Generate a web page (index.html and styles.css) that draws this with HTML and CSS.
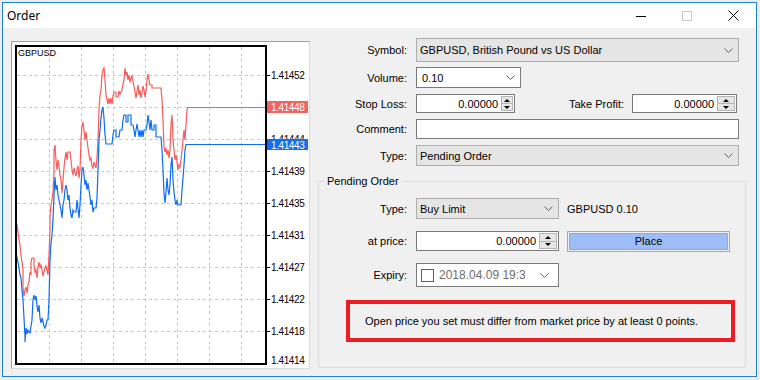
FILE: index.html
```html
<!DOCTYPE html>
<html lang="en">
<head>
  <meta charset="UTF-8">
  <title>Order</title>
  <link rel="stylesheet" href="styles.css">
</head>
<body>
<div class="window">
  <div class="titlebar">
    <span class="title">Order</span>
    <div class="caption">
      <div class="cap"><svg width="10" height="10" viewBox="0 0 10 10"><line x1="0" y1="5.5" x2="10" y2="5.5" stroke="#000" stroke-width="1"/></svg></div>
      <div class="cap"><svg width="10" height="10" viewBox="0 0 10 10"><rect x="0.5" y="0.5" width="9" height="9" fill="none" stroke="#c8c8c8" stroke-width="1"/></svg></div>
      <div class="cap"><svg width="11" height="11" viewBox="0 0 11 11"><path d="M0.5 0.5 L10.5 10.5 M10.5 0.5 L0.5 10.5" stroke="#000" stroke-width="1"/></svg></div>
    </div>
  </div>

  <div class="content">
    <div class="chart_panel">
      <svg width="297" height="326" viewBox="12 42 297 326" class="chart">
        <!-- grid -->
        <g stroke="#c8c8c8" stroke-width="1" stroke-dasharray="3 3" shape-rendering="crispEdges">
          <line x1="49.5" y1="47" x2="49.5" y2="362"/>
          <line x1="81.5" y1="47" x2="81.5" y2="362"/>
          <line x1="113.5" y1="47" x2="113.5" y2="362"/>
          <line x1="145.5" y1="47" x2="145.5" y2="362"/>
          <line x1="177.5" y1="47" x2="177.5" y2="362"/>
          <line x1="209.5" y1="47" x2="209.5" y2="362"/>
          <line x1="241.5" y1="47" x2="241.5" y2="362"/>
          <line x1="17" y1="75.5" x2="264" y2="75.5"/>
          <line x1="17" y1="107.5" x2="264" y2="107.5"/>
          <line x1="17" y1="139.5" x2="264" y2="139.5"/>
          <line x1="17" y1="171.5" x2="264" y2="171.5"/>
          <line x1="17" y1="203.5" x2="264" y2="203.5"/>
          <line x1="17" y1="235.5" x2="264" y2="235.5"/>
          <line x1="17" y1="267.5" x2="264" y2="267.5"/>
          <line x1="17" y1="299.5" x2="264" y2="299.5"/>
          <line x1="17" y1="331.5" x2="264" y2="331.5"/>
        </g>

        <!-- ask line -->
        <polyline fill="none" stroke="#f85a5a" stroke-width="1.2" stroke-linejoin="miter"
          points="16,220 17,225 18,232 19,240 20,245 21,255 22,262 23,270 23,288 24,296 25,290 26,287 27,293 28,285 29,282 30,272 31,275 31,262 32,258 34,258 34,266 35,272 36,270 37,278 38,268 39,262 40,268 41,265 42,270 43,276 44,272 45,268 46,266 47,270 48,275 49,255 50,230 50,215 51,205 52,200 53,192 54,172 54,150 55,145 56,160 57,170 58,160 59,166 60,175 61,180 62,193 63,180 64,168 65,158 66,152 67,160 68,152 70,152 71,160 72,170 73,175 74,168 75,172 76,176 77,170 78,166 79,178 80,170 81,140 82,126 83,122 84,130 85,140 86,132 87,140 88,148 89,155 90,160 91,158 92,166 93,168 94,162 95,165 96,168 97,158 98,140 99,110 100,95 101,90 102,75 103,70 104,68 105,80 106,95 107,100 108,104 109,98 110,104 111,98 112,104 113,96 114,92 116,92 116,97 118,97 119,91 120,94 122,90 123,84 124,80 125,68 126,75 127,72 128,80 129,75 130,82 131,78 132,76 133,82 134,86 135,92 136,98 137,91 138,85 139,95 140,90 141,98 142,93 143,86 144,90 145,97 146,91 147,80 148,74 149,80 150,85 152,85 152,88 161,88 162,100 163,120 164,147 165,152 166,148 167,155 168,150 169,158 170,150 171,125 172,115 173,140 174,150 175,160 176,155 177,162 178,170 179,165 180,167 181,160 182,150 183,140 184,130 185,140 186,125 187,110 188,107.5 266,107.5"/>

        <!-- bid line -->
        <polyline fill="none" stroke="#0c6cf5" stroke-width="1.2" stroke-linejoin="miter"
          points="16,252 17,258 18,262 19,268 20,275 21,278 22,290 23,300 24,318 25,336 25,342 26,328 27,334 28,330 29,332 30,333 31,326 32,320 33,300 34,295 35,300 36,296 37,306 38,312 39,305 40,318 41,323 42,318 43,322 44,326 45,328 46,325 47,320 48,320 49,300 50,260 51,243 52,235 53,220 54,195 55,177 56,190 57,185 58,195 59,200 60,205 61,210 62,218 63,205 64,200 65,190 66,185 67,190 68,200 69,195 70,208 71,215 72,218 73,210 74,212 76,212 77,200 78,208 79,218 80,205 81,185 82,170 83,167 84,175 85,185 86,180 87,190 88,183 89,190 90,197 91,205 92,200 93,212 94,208 96,208 97,198 98,170 99,140 100,130 101,118 102,110 103,107 104,118 105,135 106,144 112,144 113,135 114,130 116,130 116,137 119,137 120,130 122,130 123,120 124,115 126,115 126,122 128,122 128,115 131,115 131,125 133,125 134,130 135,137 136,130 137,124 138,130 139,137 140,130 141,137 142,130 143,137 144,130 146,130 147,125 148,115 149,122 150,130 151,120 152,130 154,130 154,125 156,125 156,137 161,137 162,150 163,170 164,193 165,203 166,192 167,178 168,190 169,195 170,185 171,165 172,157 173,180 174,192 175,200 176,205 177,200 178,205 181,205 182,190 183,178 184,165 185,150 186,144.5 266,144.5"/>

        <!-- frame -->
        <rect x="16" y="46" width="250" height="318" fill="none" stroke="#000" stroke-width="2"/>
        <g stroke="#000" stroke-width="1" shape-rendering="crispEdges">
          <line x1="266" y1="75.5" x2="270" y2="75.5"/>
          <line x1="266" y1="107.5" x2="270" y2="107.5"/>
          <line x1="266" y1="139.5" x2="270" y2="139.5"/>
          <line x1="266" y1="171.5" x2="270" y2="171.5"/>
          <line x1="266" y1="203.5" x2="270" y2="203.5"/>
          <line x1="266" y1="235.5" x2="270" y2="235.5"/>
          <line x1="266" y1="267.5" x2="270" y2="267.5"/>
          <line x1="266" y1="299.5" x2="270" y2="299.5"/>
          <line x1="266" y1="331.5" x2="270" y2="331.5"/>
        </g>

        <text x="18" y="56" class="sym">GBPUSD</text>

        <g class="prices">
          <text x="271" y="79">1.41452</text>
          <text x="271" y="143">1.41444</text>
          <text x="271" y="175">1.41439</text>
          <text x="271" y="207">1.41435</text>
          <text x="271" y="239">1.41431</text>
          <text x="271" y="271">1.41427</text>
          <text x="271" y="303">1.41422</text>
          <text x="271" y="335">1.41418</text>
          <text x="271" y="364">1.41414</text>
        </g>
        <rect x="267" y="101" width="41" height="12" fill="#f26262"/>
        <text x="271" y="111" class="tag">1.41448</text>
        <rect x="267" y="139" width="41" height="11" fill="#0f6ef2"/>
        <text x="271" y="148.5" class="tag">1.41443</text>
      </svg>
    </div>

    <div class="form">
      <div class="row r_symbol">
        <span class="lbl">Symbol:</span>
        <div class="combo w_full">GBPUSD, British Pound vs US Dollar<svg class="chev" width="9" height="5" viewBox="0 0 9 5"><polyline points="0.5,0.5 4.5,4.5 8.5,0.5" fill="none" stroke="#606060"/></svg></div>
      </div>
      <div class="row r_volume">
        <span class="lbl">Volume:</span>
        <div class="combo edit w_vol">0.10<svg class="chev" width="9" height="5" viewBox="0 0 9 5"><polyline points="0.5,0.5 4.5,4.5 8.5,0.5" fill="none" stroke="#606060"/></svg></div>
      </div>
      <div class="row r_stops">
        <span class="lbl">Stop Loss:</span>
        <div class="num w_sl"><span class="val">0.00000</span><div class="spin sp_small"><i class="up"></i><i class="dn"></i></div></div>
        <span class="lbl2">Take Profit:</span>
        <div class="num w_tp"><span class="val">0.00000</span><div class="spin"><i class="up"></i><i class="dn"></i></div></div>
      </div>
      <div class="row r_comment">
        <span class="lbl">Comment:</span>
        <div class="edit_box w_full"></div>
      </div>
      <div class="row r_type">
        <span class="lbl">Type:</span>
        <div class="combo w_full">Pending Order<svg class="chev" width="9" height="5" viewBox="0 0 9 5"><polyline points="0.5,0.5 4.5,4.5 8.5,0.5" fill="none" stroke="#606060"/></svg></div>
      </div>

      <fieldset class="group">
        <legend>Pending Order</legend>
        <div class="row g_type">
          <span class="lbl">Type:</span>
          <div class="combo w_half">Buy Limit<svg class="chev" width="9" height="5" viewBox="0 0 9 5"><polyline points="0.5,0.5 4.5,4.5 8.5,0.5" fill="none" stroke="#606060"/></svg></div>
          <span class="info">GBPUSD 0.10</span>
        </div>
        <div class="row g_price">
          <span class="lbl">at price:</span>
          <div class="num w_half"><span class="val">0.00000</span><div class="spin"><i class="up"></i><i class="dn"></i></div></div>
          <button class="place"><span>Place</span></button>
        </div>
        <div class="row g_expiry">
          <span class="lbl">Expiry:</span>
          <div class="date w_half">
            <span class="check"></span>
            <span class="date_txt">2018.04.09 19:35</span>
            <svg class="chev" width="9" height="5" viewBox="0 0 9 5"><polyline points="0.5,0.5 4.5,4.5 8.5,0.5" fill="none" stroke="#606060"/></svg>
          </div>
        </div>
        <div class="warn">Open price you set must differ from market price by at least 0 points.</div>
      </fieldset>
    </div>
  </div>
</div>
</body>
</html>
```

FILE: styles.css
```css
body {
  margin: 0;
  background: #ececec;
  font-family: "Liberation Sans", Arial, sans-serif;
  font-size: 11px;
  color: #000;
}
.window {
  margin: 2px 0 0 2px;
  width: 753px;
  height: 373px;
  border: 1px solid #1883d7;
  background: #f0f0f0;
}
.titlebar {
  height: 25px;
  background: #fff;
  display: flex;
  align-items: center;
}
.title {
  margin-left: 4px;
  font-family: "Noto Sans", "Open Sans", sans-serif;
  font-size: 12px;
}
.caption {
  margin-left: auto;
  display: flex;
}
.cap {
  width: 46px;
  height: 25px;
  display: flex;
  align-items: center;
  justify-content: center;
}
.content {
  display: flex;
  height: 348px;
  box-sizing: border-box;
  padding: 10px 0 0 8px;
}
.chart_panel {
  margin-top: 3px;
  width: 299px;
  height: 328px;
  box-sizing: border-box;
  border: 1px solid #a0a0a0;
  border-right-color: #dadada;
  border-bottom-color: #dadada;
  background: #fff;
}
.chart {
  display: block;
}
.chart text {
  font-family: "Liberation Sans", Arial, sans-serif;
}
.sym {
  font-size: 9px;
  fill: #000;
}
.prices text {
  font-size: 10px;
  letter-spacing: -0.4px;
  fill: #000;
}
.tag {
  font-size: 10px;
  letter-spacing: -0.4px;
  fill: #fff;
}
.form {
  margin-left: 8px;
  width: 428px;
}
.row {
  display: flex;
  align-items: center;
}
.lbl {
  width: 89px;
  margin-right: 9px;
  text-align: right;
  flex: none;
}
.lbl2 {
  flex: 1;
  text-align: right;
  padding-right: 8px;
}
.r_symbol { height: 24px; }
.r_volume { height: 21px; margin-top: 5px; }
.r_stops { height: 19px; margin-top: 6px; padding-right: 9px; }
.r_comment { height: 20px; margin-top: 6px; }
.r_type { height: 21px; margin-top: 6px; }

.w_full { width: 323px; }
.w_vol { width: 105px; }
.w_half { width: 143px; }
.w_sl { width: 99px; }
.w_tp { width: 105px; }

.combo {
  height: 100%;
  box-sizing: border-box;
  border: 1px solid #adadad;
  background: #e5e5e5;
  display: flex;
  align-items: center;
  padding: 0 3px;
  white-space: nowrap;
}
.combo.edit {
  background: #fff;
  border-color: #7a7a7a;
  padding-left: 5px;
}
.chev {
  margin-left: auto;
  margin-right: 2px;
  flex: none;
}
.edit_box {
  height: 100%;
  box-sizing: border-box;
  border: 1px solid #7a7a7a;
  background: #fff;
}
.num {
  height: 100%;
  box-sizing: border-box;
  border: 1px solid #7a7a7a;
  background: #fff;
  display: flex;
}
.val {
  flex: 1;
  text-align: right;
  padding-right: 3px;
  align-self: center;
}
.spin {
  width: 16px;
  margin: 1px 1px 1px 0;
  border: 1px solid #b4b4b4;
  background: #e6e6e6;
  display: flex;
  flex-direction: column;
}
.spin.sp_small {
  width: 10px;
}
.spin i {
  flex: 1;
  display: flex;
  align-items: center;
  justify-content: center;
}
.spin i + i {
  border-top: 1px solid #b4b4b4;
}
.spin .up::after {
  content: "";
  border-left: 3px solid transparent;
  border-right: 3px solid transparent;
  border-bottom: 3px solid #000;
}
.spin .dn::after {
  content: "";
  border-left: 3px solid transparent;
  border-right: 3px solid transparent;
  border-top: 3px solid #000;
}

.group {
  margin: 9px 0 0 0;
  padding: 0;
  height: 193px;
  box-sizing: border-box;
  border: 1px solid #dcdcdc;
  min-width: 0;
}
.group legend {
  margin-left: 6px;
  padding: 0 2px;
  line-height: 13px;
}
.group .lbl {
  width: 88px;
}
.g_type { height: 21px; margin-top: 10px; }
.g_price { height: 20px; margin-top: 12px; }
.g_expiry { height: 24px; margin-top: 12px; }
.info {
  margin-left: 8px;
}
.place {
  margin-left: 8px;
  width: 163px;
  height: 21px;
  padding: 1px;
  border: 1px solid #a8a8a8;
  background: #f0f0f0;
  font: inherit;
}
.place span {
  display: flex;
  height: 100%;
  box-sizing: border-box;
  align-items: center;
  justify-content: center;
  background: #9ebdf6;
  border: 1px solid #86aaf0;
}
.date {
  height: 100%;
  box-sizing: border-box;
  border: 1px solid #7a7a7a;
  background: #fff;
  display: flex;
  align-items: center;
  padding-left: 4px;
}
.check {
  width: 11px;
  height: 11px;
  border: 1px solid #1c6ad0;
  flex: none;
}
.date_txt {
  margin-left: 5px;
  width: 86px;
  overflow: hidden;
  white-space: nowrap;
  color: #6d6d6d;
  font-size: 12px;
}
.date .chev {
  margin-right: 9px;
}
.warn {
  margin: 13px 0 0 27px;
  width: 389px;
  height: 42px;
  box-sizing: border-box;
  border: 4px solid #ed1c24;
  padding-left: 15px;
  display: flex;
  align-items: center;
}
```
